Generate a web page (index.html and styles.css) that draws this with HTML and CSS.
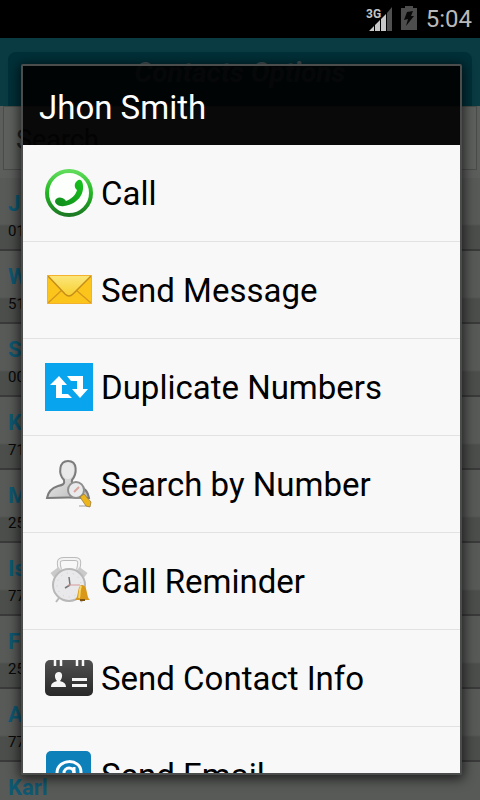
FILE: index.html
```html
<!DOCTYPE html>
<html lang="en">
<head>
<meta charset="utf-8">
<meta name="viewport" content="width=device-width, initial-scale=1">
<title>Contacts Options</title>
<link rel="stylesheet" href="styles.css">
</head>
<body>
<div class="screen">
  <div class="status">
    <svg class="signal" viewBox="0 0 28 26" aria-hidden="true">
      <path d="M4 25 9 20V25ZM10 19 15 14V25H10ZM16 13 21 8V25H16Z" fill="#c8c8c8"/>
      <path d="M22 7 27 1V25H22Z" fill="#505050"/>
      <text x="1" y="12" class="net">3G</text>
    </svg>
    <svg class="battery" viewBox="0 0 16 24" aria-hidden="true">
      <path d="M4 0H12V2H16V24H0V2H4Z" fill="#4d4d4d"/>
      <path d="M6 6 12 5 10 10 13 10 5 20 7 13 3 14Z" fill="#080808"/>
    </svg>
    <span class="clock">5:04</span>
  </div>
  <header class="bar"><h1 class="bar-title">Contacts Options</h1></header>
  <div class="search"><input class="search-box" type="text" placeholder="Search" aria-label="Search"></div>
  <ul class="contacts">
    <li class="contact"><b class="name">J</b><span class="phone">01</span></li>
    <li class="contact"><b class="name">W</b><span class="phone">51</span></li>
    <li class="contact"><b class="name">S</b><span class="phone">00</span></li>
    <li class="contact"><b class="name">K</b><span class="phone">71</span></li>
    <li class="contact"><b class="name">M</b><span class="phone">25</span></li>
    <li class="contact"><b class="name">Is</b><span class="phone">77</span></li>
    <li class="contact"><b class="name">F</b><span class="phone">25</span></li>
    <li class="contact"><b class="name">A</b><span class="phone">77</span></li>
    <li class="contact"><b class="name">Karl</b></li>
  </ul>

  <section class="dialog" role="dialog" aria-labelledby="who">
    <h2 class="dialog-title" id="who">Jhon Smith</h2>
    <div class="menu">
      <button class="item" type="button">
        <svg class="icon" viewBox="0 0 48 48" aria-hidden="true">
          <defs>
            <linearGradient id="ring" x1="0" y1="0" x2="0" y2="1"><stop offset="0" stop-color="#5fdc5a"/><stop offset=".5" stop-color="#22b522"/><stop offset="1" stop-color="#1d7a24"/></linearGradient>
            <linearGradient id="handset" x1="0" y1="1" x2="1" y2="0"><stop offset="0" stop-color="#118a1c"/><stop offset="1" stop-color="#16c41c"/></linearGradient>
          </defs>
          <circle cx="24" cy="24" r="22" fill="#fdfffd" stroke="url(#ring)" stroke-width="4"/>
          <path d="M32 12C35 9 38 12 38 17C39 28 29 36 19 37C14 38 10 35 10 32C11 28 17 27 21 32C26 30 31 26 32 21C29 19 29 14 32 12Z" fill="url(#handset)"/>
        </svg>
        <span>Call</span>
      </button>
      <button class="item" type="button">
        <svg class="icon" viewBox="0 0 48 48" aria-hidden="true">
          <defs><linearGradient id="mail" x1="0" y1="0" x2="0" y2="1"><stop offset="0" stop-color="#fbe67a"/><stop offset="1" stop-color="#f8cf2e"/></linearGradient></defs>
          <path d="M2 9H47V38H2Z" fill="#fcc51c"/>
          <path d="M3 37 17 24M46 37 31 24" stroke="#d8981c" stroke-width="1.5" fill="none"/>
          <path d="M3 10 20 28Q24 32 28 28L46 10Z" fill="url(#mail)"/>
          <path d="M3 10 20 28Q24 32 28 28L46 10" stroke="#c58e1a" stroke-width="1.5" fill="none"/>
          <path d="M2.500 9.500H46.500V37.500H2.500Z" fill="none" stroke="#f4b12c"/>
        </svg>
        <span>Send Message</span>
      </button>
      <button class="item" type="button">
        <svg class="icon" viewBox="0 0 48 48" aria-hidden="true">
          <path d="M0 0H48V48H0Z" fill="#08a5ee"/>
          <path d="M5 22 14 13 22 22H17V31H23L27 35H11V22ZM22 13H38V26H43L35 35 27 26H32V18H26Z" fill="#fff"/>
        </svg>
        <span>Duplicate Numbers</span>
      </button>
      <button class="item" type="button">
        <svg class="icon" viewBox="0 0 48 48" aria-hidden="true">
          <defs><linearGradient id="person" x1="0" y1="0" x2="1" y2="1"><stop offset="0" stop-color="#f7f7f7"/><stop offset="1" stop-color="#b5b5b5"/></linearGradient></defs>
          <path d="M2 38C3 31 7 28 13 26C18 25 20 24 19 20C13 14 14 1 23 1C33 1 32 14 27 20C26 24 29 25 34 26C40 28 43 31 44 38Q23 37 2 38Z" fill="url(#person)" stroke="#7c7c7c" stroke-width="2"/>
          <ellipse cx="23" cy="11" rx="6" ry="8" fill="#e9e9e9"/>
          <path d="M34 46H45" stroke="#ccc" stroke-width="2"/>
          <circle cx="31" cy="30" r="8" fill="#e8eaec" stroke="#8f8f8f" stroke-width="2"/>
          <path d="M29 32 34 27" stroke="#dba49c" stroke-width="2"/>
          <path d="M35 37 39 34 46 42 45 47 41 46Z" fill="#edb51c" stroke="#927333" stroke-width=".7"/>
        </svg>
        <span>Search by Number</span>
      </button>
      <button class="item" type="button">
        <svg class="icon" viewBox="0 0 48 48" aria-hidden="true">
          <path d="M15 13C13 5 13 2 19 2H30C35 2 35 5 33 13" fill="none" stroke="#bbb" stroke-width="4"/>
          <path d="M15 13C13 5 13 2 19 2H30C35 2 35 5 33 13" fill="none" stroke="#f3f3f3" stroke-width="2"/>
          <path d="M7 18 15 12M41 18 33 12" stroke="#cacaca" stroke-width="5"/>
          <path d="M14 41 11 45M34 41 37 45" stroke="#b8b8b8" stroke-width="2"/>
          <circle cx="24" cy="28" r="16" fill="#e9e9ec" stroke="#b8b8b8" stroke-width="2"/>
          <circle cx="24" cy="28" r="12" fill="none" stroke="#d0d0d4" stroke-dasharray="1 5"/>
          <path d="M25 28 24 20M25 28 20 31" stroke="#777" stroke-width="1.500"/>
          <path d="M23 28H35" stroke="#d99a9a"/>
          <path d="M30 43C34 40 32 28 37 28C43 28 41 40 45 43Z" fill="#d99817"/>
          <path d="M36 29C34 34 35 38 34 41" stroke="#f8d865" stroke-width="2" fill="none"/>
          <path d="M35 43H40" stroke="#805411" stroke-width="2"/>
        </svg>
        <span>Call Reminder</span>
      </button>
      <button class="item" type="button">
        <svg class="icon" viewBox="0 0 48 48" aria-hidden="true">
          <defs><linearGradient id="card" x1="0" y1="0" x2="0" y2="1"><stop offset="0" stop-color="#505050"/><stop offset="1" stop-color="#282828"/></linearGradient></defs>
          <rect x="0" y="6" width="48" height="36" rx="5" fill="url(#card)"/>
          <path d="M10 4V12M16 4V12M32 4V12M38 4V12" stroke="#f8f8f8" stroke-width="2.500"/>
          <path d="M6 33C6 29 9 28 12 27C9 24 9 18 14 18C18 18 18 24 15 27C18 28 21 29 21 33ZM27 24H42V27H27ZM27 30H42V33H27Z" fill="#f5f5f5"/>
        </svg>
        <span>Send Contact Info</span>
      </button>
      <button class="item" type="button">
        <svg class="icon" viewBox="0 0 48 48" aria-hidden="true">
          <rect x="1" y="0" width="45" height="46" rx="5" fill="#0d80ba"/>
          <circle cx="24" cy="22" r="5" fill="none" stroke="#fff" stroke-width="3"/>
          <path d="M29 16V24C29 29 36 28 36 21C36 7 12 7 12 22C12 35 25 36 32 32" fill="none" stroke="#fff" stroke-width="3"/>
        </svg>
        <span>Send Email</span>
      </button>
    </div>
  </section>
</div>
</body>
</html>
```
FILE: styles.css
```css
* { box-sizing: border-box; }
html, body { margin: 0; height: 100%; }
body {
  background: #585a58;
  font-family: Roboto, "Liberation Sans", sans-serif;
}
.screen {
  position: relative;
  height: 100vh;
  overflow: hidden;
}
.status {
  display: flex;
  align-items: center;
  justify-content: flex-end;
  height: 38px;
  padding-right: 8px;
  background: #000;
}
.signal { width: 28px; height: 26px; }
.net { font: bold 12px Roboto, sans-serif; fill: #c4c4c4; }
.battery { width: 16px; height: 24px; margin: 0 9px 2px 8px; }
.clock { color: #b9b9b9; font-size: 24px; line-height: 38px; }

.bar {
  height: 68px;
  padding: 14px 8px 0;
  background: #0a3a42;
}
.bar-title {
  height: 54px;
  margin: 0;
  border-radius: 8px 8px 0 0;
  background: #003039;
  color: #455457;
  font-size: 28px;
  font-style: italic;
  line-height: 42px;
  text-align: center;
}
.search {
  height: 72px;
  padding: 0 3px;
  background: #5c5e5c;
}
.search-box {
  display: block;
  width: 100%;
  height: 64px;
  padding: 4px 12px 0;
  border: 1px solid #4a4c4a;
  background: #5d605d;
  color: #222;
  font: 27px Roboto, sans-serif;
}
.search-box::placeholder { color: #222; opacity: 1; }
.contacts { margin: 0; padding: 0; list-style: none; }
.contact {
  display: flex;
  flex-direction: column;
  height: 73px;
  padding: 12px 8px 0;
  border-bottom: 2px solid #393a39;
  background: linear-gradient(#585a58 0 46px, #4c4e4c 48px 100%);
}
.name { color: #0f5872; font-size: 22px; line-height: 28px; }
.phone { color: #080808; font-size: 15px; line-height: 26px; }

.dialog {
  position: absolute;
  inset: 64px 18px 25px 21px;
  display: flex;
  flex-direction: column;
  border: 2px solid #4b4c4c;
  border-radius: 2px;
  box-shadow: 0 2px 12px 2px rgba(0, 0, 0, .65);
}
.dialog-title {
  flex: none;
  height: 79px;
  margin: 0;
  padding: 5px 16px 0;
  background: rgba(0, 0, 0, .91);
  color: #fff;
  font-size: 33px;
  font-weight: 400;
  line-height: 74px;
}
.menu {
  flex: 1;
  min-height: 0;
  overflow: hidden;
  background: #f8f8f8;
}
.item {
  display: flex;
  align-items: center;
  gap: 8px;
  width: 100%;
  height: 97px;
  padding: 0 22px;
  border: 0;
  border-bottom: 1px solid #e2e2e2;
  background: none;
  color: #000;
  font: 33px/48px Roboto, sans-serif;
  text-align: left;
}
.item span { padding-top: 2px; }
.icon { flex: none; width: 48px; height: 48px; }
```
